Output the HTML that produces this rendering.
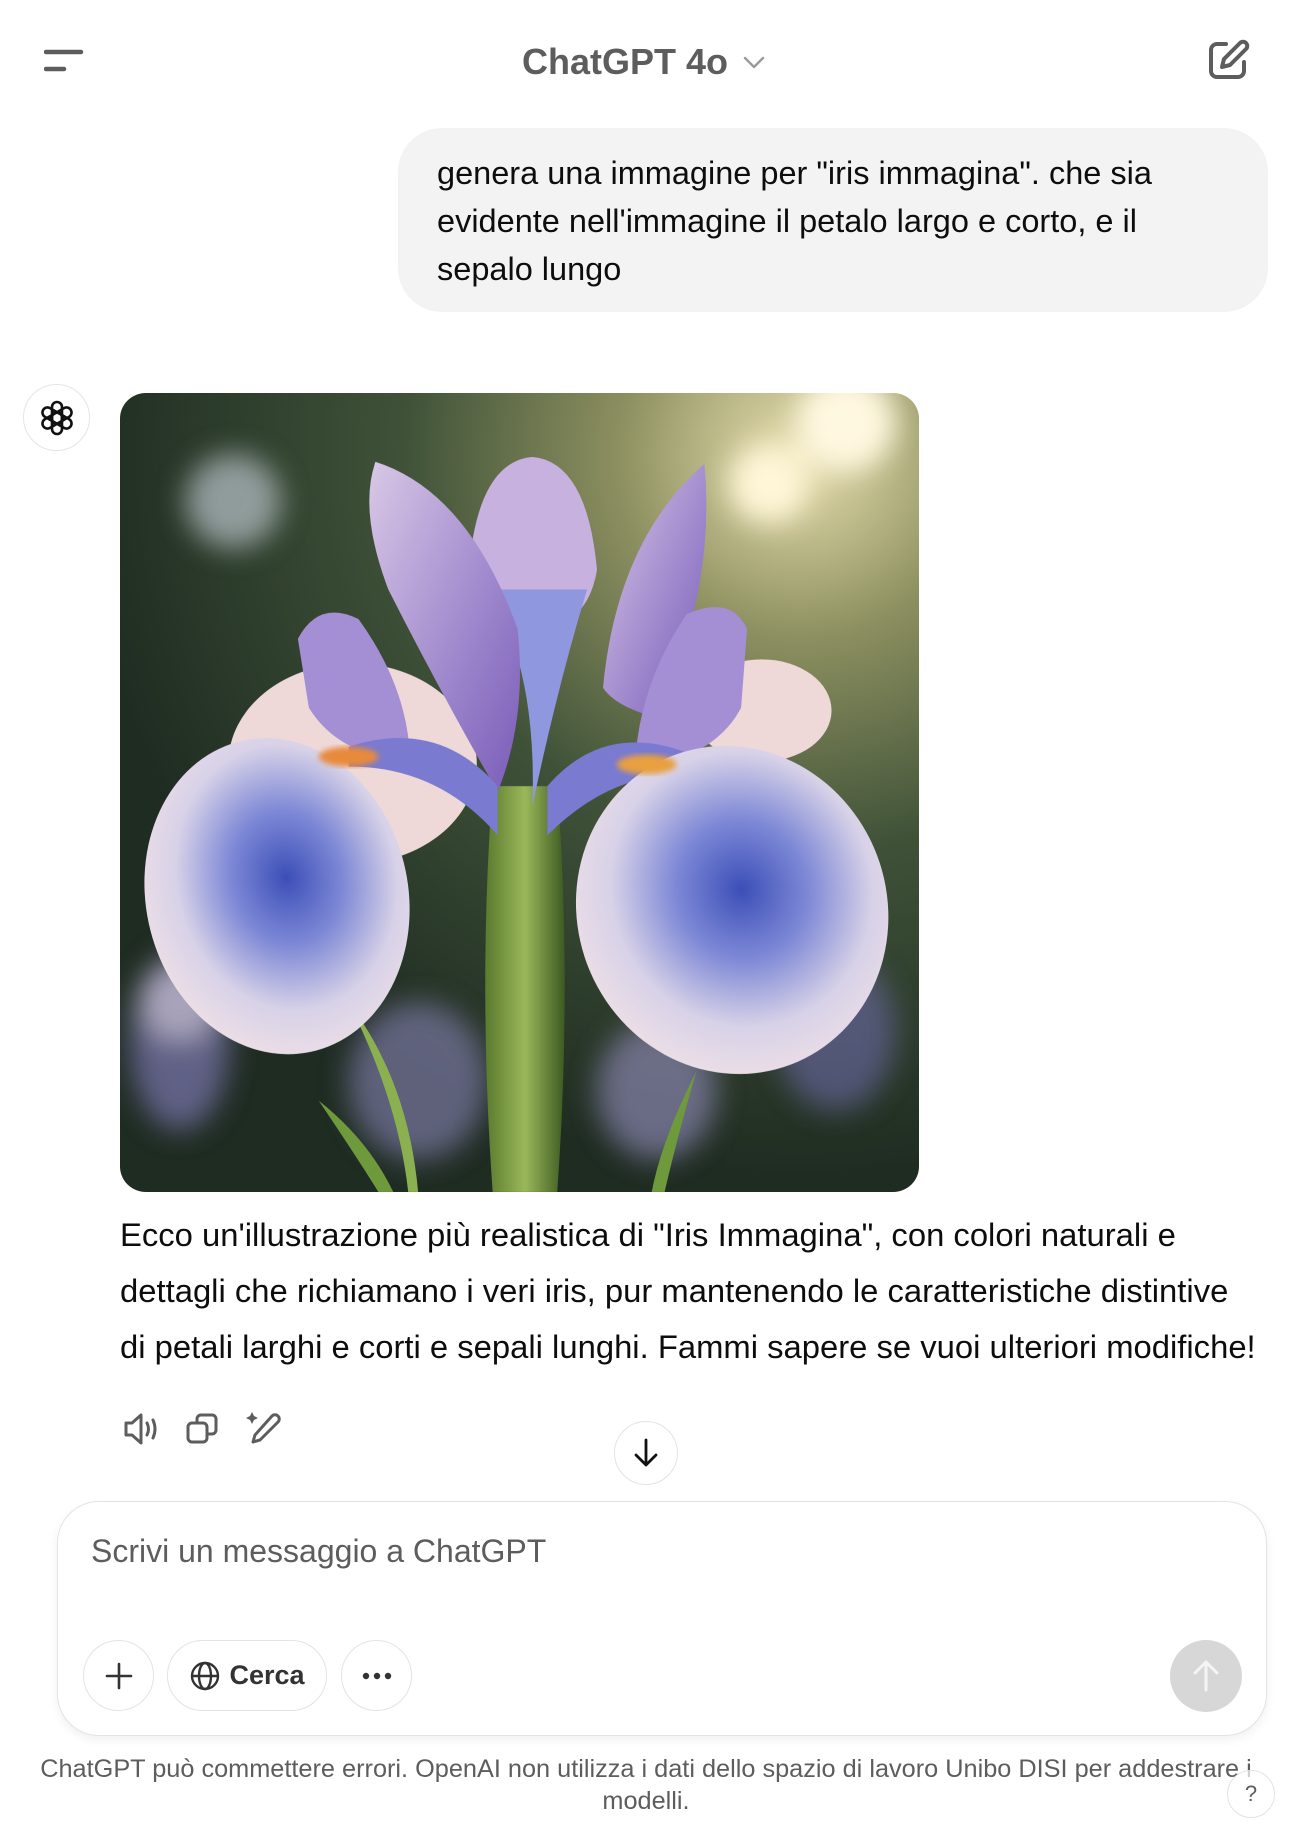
<!DOCTYPE html>
<html><head><meta charset="utf-8"><style>
*{margin:0;padding:0;box-sizing:border-box}
body{width:1292px;height:1834px;background:#fff;font-family:"Liberation Sans",sans-serif;position:relative;overflow:hidden;color:#0d0d0d}
.abs{position:absolute}
.title{left:0;width:1292px;top:41px;text-align:center;font-size:36px;font-weight:bold;color:#5d5d5d;padding-right:4px}
.bubble{left:398px;top:128px;width:870px;height:184px;background:#f3f3f3;border-radius:44px}
.utext{left:437px;top:149px;font-size:32.5px;line-height:48px;width:820px;white-space:nowrap}
.rtext{left:120px;top:1207px;font-size:32.8px;line-height:56px;width:1170px;white-space:nowrap}
.input{left:57px;top:1501px;width:1210px;height:235px;border:1.5px solid #e3e3e3;border-radius:42px;box-shadow:0 4px 10px rgba(0,0,0,.06);background:#fff}
.ph{left:91px;top:1533px;font-size:32px;color:#5d5d5d}
.btn{border:1.5px solid #e3e3e3;border-radius:36px;height:71px;top:1640px;display:flex;align-items:center;justify-content:center}
.foot{left:0;width:1292px;top:1753px;text-align:center;font-size:25.3px;line-height:32px;color:#5d5d5d}
</style></head><body>
<svg class="abs" style="left:44px;top:49px" width="40" height="24" viewBox="0 0 40 24"><path d="M2 3H37M2 20H20" stroke="#5d5d5d" stroke-width="4.5" stroke-linecap="round"/></svg>
<div class="abs title">ChatGPT 4o <svg width="24" height="16" viewBox="0 0 24 16" style="vertical-align:4px;margin-left:4px"><path d="M3 4l9 9 9-9" fill="none" stroke="#9a9a9a" stroke-width="2.4" stroke-linecap="round" stroke-linejoin="round"/></svg></div>
<svg class="abs" style="left:1206px;top:38px" width="44" height="44" viewBox="0 0 44 44"><path d="M20 6H11a6 6 0 0 0-6 6v21a6 6 0 0 0 6 6h21a6 6 0 0 0 6-6v-9" fill="none" stroke="#5d5d5d" stroke-width="4" stroke-linecap="round"/><path d="M34 5a4 4 0 0 1 6 6L24 27l-8 2 2-8z" fill="none" stroke="#5d5d5d" stroke-width="4" stroke-linejoin="round"/></svg>

<div class="abs bubble"></div>
<div class="abs utext">genera una immagine per "iris immagina". che sia<br>evidente nell'immagine il petalo largo e corto, e il<br>sepalo lungo</div>

<div class="abs" style="left:23px;top:384px;width:67px;height:67px;border:1.5px solid #e5e5e5;border-radius:50%"></div>
<svg class="abs" style="left:37px;top:398px" width="40" height="40" viewBox="-20 -20 40 40"><g fill="none" stroke="#111" stroke-width="2.6">
<rect x="-5" y="-16" width="10" height="22" rx="5" transform="rotate(0)"/><rect x="-5" y="-16" width="10" height="22" rx="5" transform="rotate(60)"/><rect x="-5" y="-16" width="10" height="22" rx="5" transform="rotate(120)"/><rect x="-5" y="-16" width="10" height="22" rx="5" transform="rotate(180)"/><rect x="-5" y="-16" width="10" height="22" rx="5" transform="rotate(240)"/><rect x="-5" y="-16" width="10" height="22" rx="5" transform="rotate(300)"/></g></svg>

<svg class="abs" style="left:120px;top:393px" width="799" height="799" viewBox="0 0 804 813" preserveAspectRatio="none">
<defs>
<clipPath id="c"><rect width="804" height="813" rx="26"/></clipPath>
<radialGradient id="bg" cx="0.85" cy="0.08" r="0.9"><stop offset="0" stop-color="#e8dfb0"/><stop offset="0.25" stop-color="#8d9060"/><stop offset="0.55" stop-color="#3f5238"/><stop offset="1" stop-color="#1f2c22"/></radialGradient>
<filter id="b"><feGaussianBlur stdDeviation="14"/></filter>
<filter id="b2"><feGaussianBlur stdDeviation="3"/></filter>
<radialGradient id="fall" cx="0.55" cy="0.45" r="0.6"><stop offset="0" stop-color="#3c4fb8"/><stop offset="0.35" stop-color="#7d88d6"/><stop offset="0.7" stop-color="#d8d2e8"/><stop offset="1" stop-color="#eee0e6"/></radialGradient>
<linearGradient id="std" x1="0" y1="0" x2="1" y2="1"><stop offset="0" stop-color="#d9c8e6"/><stop offset="0.6" stop-color="#9d86cc"/><stop offset="1" stop-color="#7a5cb8"/></linearGradient>
<linearGradient id="stem" x1="0" x2="1"><stop offset="0" stop-color="#5a7a2e"/><stop offset="0.5" stop-color="#9ab85a"/><stop offset="1" stop-color="#3d5a22"/></linearGradient>
</defs>
<g clip-path="url(#c)">
<rect width="804" height="813" fill="url(#bg)"/>
<g filter="url(#b)">
<circle cx="114" cy="110" r="48" fill="#a9b4b8" opacity=".8"/>
<circle cx="653" cy="92" r="40" fill="#fff6d8"/>
<circle cx="730" cy="30" r="50" fill="#fff8e0"/>
<ellipse cx="60" cy="660" rx="50" ry="90" fill="#7c78b0" opacity=".7"/>
<ellipse cx="300" cy="700" rx="70" ry="80" fill="#8a86b8" opacity=".6"/>
<ellipse cx="540" cy="710" rx="60" ry="70" fill="#9a92c4" opacity=".6"/>
<ellipse cx="720" cy="650" rx="60" ry="80" fill="#6d6aa8" opacity=".6"/>
<ellipse cx="60" cy="620" rx="40" ry="40" fill="#d8d0e0" opacity=".6"/>
</g>
<path d="M200 720 Q240 780 260 813 L275 813 Q250 760 200 720Z" fill="#6f9a3c"/>
<path d="M230 620 Q280 720 290 813 L300 813 Q290 700 230 620Z" fill="#8ab050"/>
<path d="M580 690 Q545 760 535 813 L548 813 Q560 760 580 690Z" fill="#6f9a3c"/>
<path d="M375 400 Q360 600 375 813 L440 813 Q455 600 440 400Z" fill="url(#stem)"/>
<ellipse cx="234" cy="377" rx="125" ry="102" fill="#eed9d8"/>
<ellipse cx="646" cy="323" rx="70" ry="52" fill="#eed9d8"/>
<path d="M351 180 Q360 70 415 65 Q470 70 480 180 Q470 240 415 240 Q360 240 351 180Z" fill="#c7b1de"/>
<path d="M370 200 Q420 280 415 420 Q440 300 470 200Z" fill="#8f97de"/>
<path d="M257 70 Q350 100 400 240 Q410 330 380 406 Q320 300 270 200 Q240 120 257 70Z" fill="url(#std)"/>
<path d="M588 72 Q600 200 540 330 Q500 320 486 300 Q500 150 588 72Z" fill="url(#std)"/>
<path d="M179 250 Q200 210 240 230 Q290 300 292 374 Q220 370 190 320Z" fill="#a48ed4"/>
<path d="M631 240 Q615 205 570 225 Q520 300 518 385 Q600 370 625 320Z" fill="#a48ed4"/>
<path d="M230 360 Q320 330 380 400 L380 450 Q320 380 230 380Z" fill="#7a7ad0"/>
<path d="M580 370 Q490 330 430 400 L430 450 Q500 380 580 390Z" fill="#7a7ad0"/>
<g transform="rotate(-12 158 512)"><ellipse cx="158" cy="512" rx="132" ry="162" fill="url(#fall)"/></g>
<g transform="rotate(-18 616 526)"><ellipse cx="616" cy="526" rx="156" ry="168" fill="url(#fall)"/></g>
<ellipse cx="230" cy="370" rx="30" ry="10" fill="#e88a3a" filter="url(#b2)"/>
<ellipse cx="530" cy="378" rx="30" ry="10" fill="#e8a040" filter="url(#b2)"/>
</g></svg>

<div class="abs rtext">Ecco un'illustrazione più realistica di "Iris Immagina", con colori naturali e<br>dettagli che richiamano i veri iris, pur mantenendo le caratteristiche distintive<br>di petali larghi e corti e sepali lunghi. Fammi sapere se vuoi ulteriori modifiche!</div>

<svg class="abs" style="left:122px;top:1412px" width="40" height="34" viewBox="0 0 40 34"><path d="M4 11h6l9-8v28l-9-8H4z" fill="none" stroke="#5d5d5d" stroke-width="3" stroke-linejoin="round"/><path d="M25 11q3 6 0 12M31 8q4 9 0 18" fill="none" stroke="#5d5d5d" stroke-width="3" stroke-linecap="round"/></svg>
<svg class="abs" style="left:185px;top:1412px" width="36" height="34" viewBox="0 0 36 34"><rect x="3" y="11" width="19" height="19" rx="4" fill="none" stroke="#5d5d5d" stroke-width="3"/><path d="M12 11V7a4 4 0 0 1 4-4h11a4 4 0 0 1 4 4v11a4 4 0 0 1-4 4h-5" fill="none" stroke="#5d5d5d" stroke-width="3"/></svg>
<svg class="abs" style="left:244px;top:1410px" width="38" height="36" viewBox="0 0 38 36"><path d="M8 2l2 4 4 2-4 2-2 4-2-4-4-2 4-2z" fill="#5d5d5d"/><path d="M28 6a4 4 0 0 1 6 6L16 30l-7 2 2-7z" fill="none" stroke="#5d5d5d" stroke-width="3" stroke-linejoin="round"/></svg>

<div class="abs" style="left:614px;top:1421px;width:64px;height:64px;border:1.5px solid #e3e3e3;border-radius:50%;background:#fff"></div>
<svg class="abs" style="left:632px;top:1437px" width="28" height="32" viewBox="0 0 28 32"><path d="M14 3v25M4 18l10 10 10-10" fill="none" stroke="#111" stroke-width="2.8" stroke-linecap="round" stroke-linejoin="round"/></svg>

<div class="abs input"></div>
<div class="abs ph">Scrivi un messaggio a ChatGPT</div>
<div class="abs btn" style="left:83px;width:71px"><svg width="30" height="30" viewBox="0 0 30 30"><path d="M15 3v24M3 15h24" stroke="#333" stroke-width="2.6" stroke-linecap="round"/></svg></div>
<div class="abs btn" style="left:167px;width:160px;font-size:27px;font-weight:bold;color:#333"><svg width="32" height="32" viewBox="0 0 32 32" style="margin-right:8px"><g fill="none" stroke="#333" stroke-width="2.4"><circle cx="16" cy="16" r="13"/><ellipse cx="16" cy="16" rx="6" ry="13"/><path d="M3 16h26"/></g></svg>Cerca</div>
<div class="abs btn" style="left:341px;width:71px"><svg width="32" height="8" viewBox="0 0 32 8"><circle cx="5" cy="4" r="3.2" fill="#333"/><circle cx="16" cy="4" r="3.2" fill="#333"/><circle cx="27" cy="4" r="3.2" fill="#333"/></svg></div>
<div class="abs" style="left:1170px;top:1640px;width:72px;height:72px;border-radius:50%;background:#d7d7d7;display:flex;align-items:center;justify-content:center"><svg width="30" height="34" viewBox="0 0 30 34"><path d="M15 31V4M4 14L15 3l11 11" fill="none" stroke="#f5f5f5" stroke-width="3" stroke-linecap="round" stroke-linejoin="round"/></svg></div>

<div class="abs foot">ChatGPT può commettere errori. OpenAI non utilizza i dati dello spazio di lavoro Unibo DISI per addestrare i<br>modelli.</div>
<div class="abs" style="left:1227px;top:1770px;width:48px;height:48px;border:1.5px solid #e3e3e3;border-radius:50%;background:rgba(255,255,255,.7);text-align:center;line-height:46px;font-size:22px;color:#5d5d5d">?</div>
</body></html>
